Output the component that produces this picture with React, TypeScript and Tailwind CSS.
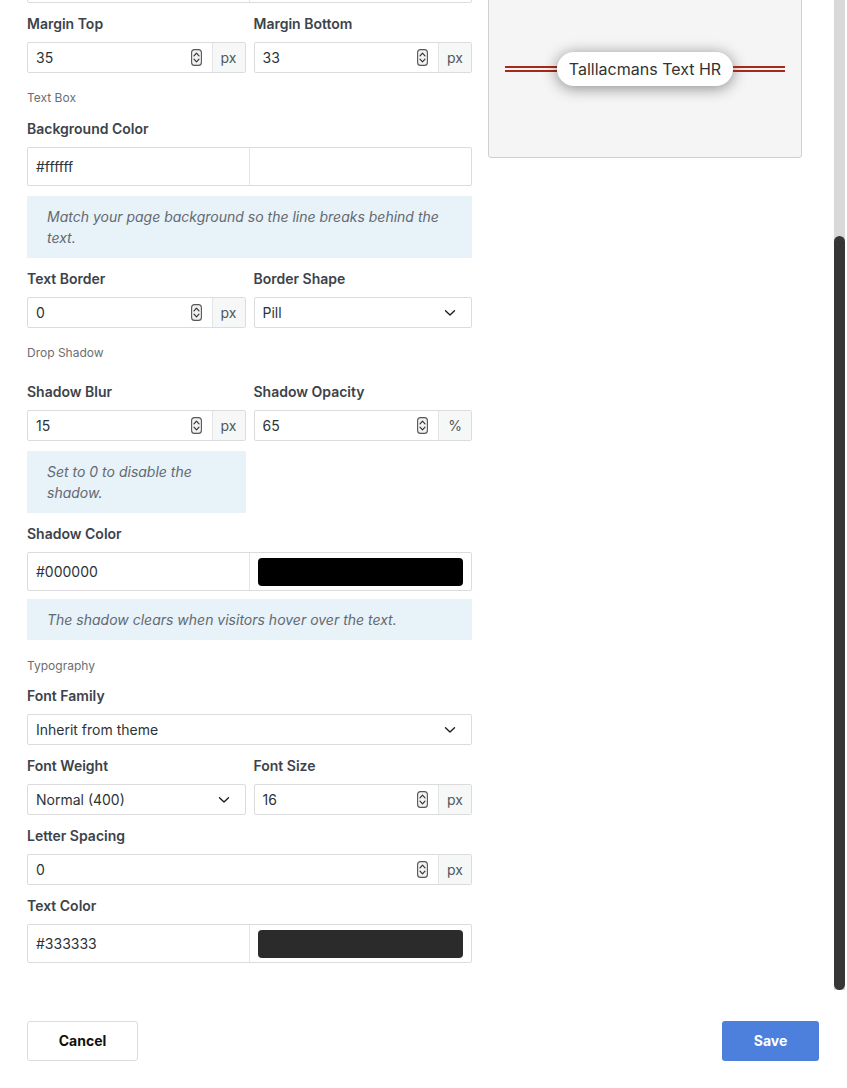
import React from 'react';

const Spinner = () => (
  <svg width="11" height="17" viewBox="0 0 11 17" className="shrink-0">
    <rect x="0.6" y="0.6" width="9.8" height="15.8" rx="3" fill="#f2f2f2" stroke="#555" strokeWidth="1.1" />
    <polyline points="3,6.8 5.5,4.2 8,6.8" fill="none" stroke="#333" strokeWidth="1.2" strokeLinecap="round" strokeLinejoin="round" />
    <polyline points="3,10.2 5.5,12.8 8,10.2" fill="none" stroke="#333" strokeWidth="1.2" strokeLinecap="round" strokeLinejoin="round" />
  </svg>
);

const Chevron = () => (
  <svg width="12" height="8" viewBox="0 0 12 8" className="shrink-0">
    <polyline points="1.5,1.8 6,6 10.5,1.8" fill="none" stroke="#1e1e1e" strokeWidth="1.4" strokeLinecap="round" strokeLinejoin="round" />
  </svg>
);

const Label = ({ children }: { children: React.ReactNode }) => (
  <div className="h-5 leading-5 mb-2 text-sm font-semibold text-[#3c434a]">{children}</div>
);

const Section = ({ children, className = '' }: { children: React.ReactNode; className?: string }) => (
  <div className={`h-4 leading-4 text-xs text-[#6b6e73] ${className}`}>{children}</div>
);

const NumberInput = ({ value, unit }: { value: string; unit: string }) => (
  <div className="flex h-[31px] border border-[#dcdcde] rounded-[2px] bg-white">
    <div className="flex-1 flex items-center pl-2 pr-[10px] text-sm text-[#2c3338]">
      <span className="flex-1">{value}</span>
      <Spinner />
    </div>
    <div className="w-[33px] flex items-center justify-center bg-[#f6f7f7] border-l border-[#e4e4e6] text-sm text-[#50575e]">
      {unit}
    </div>
  </div>
);

const SelectInput = ({ value }: { value: string }) => (
  <div className="flex items-center h-[31px] border border-[#dcdcde] rounded-[2px] bg-white pl-2 pr-[15px] text-sm text-[#2c3338]">
    <span className="flex-1">{value}</span>
    <Chevron />
  </div>
);

const ColorRow = ({ value, swatch, className = '' }: { value?: string; swatch?: string; className?: string }) => (
  <div className={`flex h-[39px] border border-[#dcdcde] rounded-[2px] bg-white ${className}`}>
    <div className="w-[222px] flex items-center pl-2 border-r border-[#e4e4e6] text-sm text-[#2c3338]">{value}</div>
    <div className="flex-1 flex items-center px-2">
      {swatch && <div className="w-full h-[28px] rounded-[4px]" style={{ backgroundColor: swatch }} />}
    </div>
  </div>
);

const Notice = ({ children, className = '' }: { children: React.ReactNode; className?: string }) => (
  <div className={`bg-[#e7f2f9] px-5 py-[10px] text-sm leading-[21px] italic text-[#646970] ${className}`}>{children}</div>
);

const App = () => {
  return (
    <div className="h-[1088px] flex flex-col bg-white overflow-hidden" style={{ fontFamily: 'Inter, "Noto Sans", sans-serif' }}>
      {/* Scroll area */}
      <div className="h-[990px] flex overflow-hidden">
        <div className="flex-1 flex items-start gap-4 pl-[27px] pr-[32px]">
          {/* Settings */}
          <div className="w-[445px] flex flex-col">
            {/* tail of the field scrolled out above */}
            <ColorRow className="mt-[-36px]" />

            <div className="grid grid-cols-2 gap-2 mt-[11px]">
              <div>
                <Label>Margin Top</Label>
                <NumberInput value="35" unit="px" />
              </div>
              <div>
                <Label>Margin Bottom</Label>
                <NumberInput value="33" unit="px" />
              </div>
            </div>

            <Section className="mt-[17px]">Text Box</Section>

            <div className="mt-[13px]">
              <Label>Background Color</Label>
              <ColorRow value="#ffffff" />
            </div>
            <Notice className="mt-[10px]">Match your page background so the line breaks behind the text.</Notice>

            <div className="grid grid-cols-2 gap-2 mt-[11px]">
              <div>
                <Label>Text Border</Label>
                <NumberInput value="0" unit="px" />
              </div>
              <div>
                <Label>Border Shape</Label>
                <SelectInput value="Pill" />
              </div>
            </div>

            <Section className="mt-[17px]">Drop Shadow</Section>

            <div className="grid grid-cols-2 gap-2 mt-[21px]">
              <div>
                <Label>Shadow Blur</Label>
                <NumberInput value="15" unit="px" />
                <Notice className="mt-[10px]">Set to 0 to disable the shadow.</Notice>
              </div>
              <div>
                <Label>Shadow Opacity</Label>
                <NumberInput value="65" unit="%" />
              </div>
            </div>

            <div className="mt-[11px]">
              <Label>Shadow Color</Label>
              <ColorRow value="#000000" swatch="#000000" />
            </div>
            <Notice className="mt-2">The shadow clears when visitors hover over the text.</Notice>

            <Section className="mt-[18px]">Typography</Section>

            <div className="mt-3">
              <Label>Font Family</Label>
              <SelectInput value="Inherit from theme" />
            </div>

            <div className="grid grid-cols-2 gap-2 mt-[11px]">
              <div>
                <Label>Font Weight</Label>
                <SelectInput value="Normal (400)" />
              </div>
              <div>
                <Label>Font Size</Label>
                <NumberInput value="16" unit="px" />
              </div>
            </div>

            <div className="mt-[11px]">
              <Label>Letter Spacing</Label>
              <NumberInput value="0" unit="px" />
            </div>

            <div className="mt-[11px]">
              <Label>Text Color</Label>
              <ColorRow value="#333333" swatch="#2b2b2b" />
            </div>
          </div>

          {/* Preview */}
          <div className="w-[314px] mt-[-21px] h-[179px] flex items-center px-4 bg-[#f5f5f5] border border-[#d0d0d0] rounded-[3px]">
            <div className="flex-1 flex items-center">
              <div className="flex-1 h-[6px] border-y-2 border-[#a52a1a]" />
              <div className="h-[34px] px-3 flex items-center rounded-full bg-white text-base text-[#333] shadow-[0_2px_15px_rgba(0,0,0,0.45)]">
                Talllacmans Text HR
              </div>
              <div className="flex-1 h-[6px] border-y-2 border-[#a52a1a]" />
            </div>
          </div>
        </div>

        {/* Scrollbar */}
        <div className="w-[11px] flex flex-col bg-[#d9d9d9]">
          <div className="h-[236px]" />
          <div className="flex-1 rounded-full bg-[#363636]" />
        </div>
        <div className="w-[2px]" />
      </div>

      {/* Footer */}
      <div className="flex-1 flex items-start justify-between pl-[27px] pr-[28px] pt-[31px]">
        <button className="w-[111px] h-10 border border-[#dcdcde] rounded-[3px] bg-white text-sm font-bold text-[#111]">
          Cancel
        </button>
        <button className="w-[97px] h-10 rounded-[3px] bg-[#4c80dc] text-sm font-bold text-white">
          Save
        </button>
      </div>
    </div>
  );
};

export default App;
